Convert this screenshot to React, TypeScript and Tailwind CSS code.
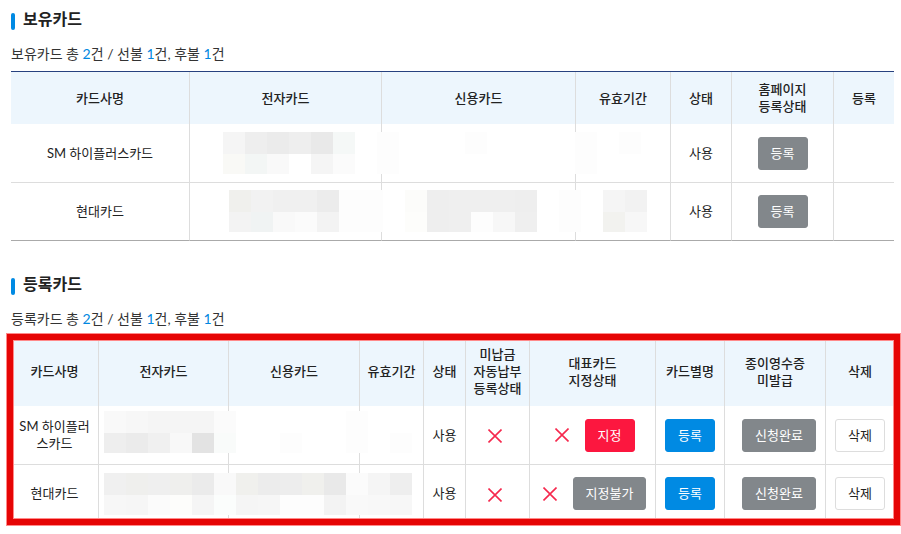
import type { ReactNode } from 'react';

type MosaicProps = {
  rows: string[];
  className: string;
};

// Masked card numbers. Each row is a list of hex tones, "-" is plain white.
const MASKS = {
  ownedFirst: [
    'f5f5f5 eeeeee ebebeb eeeeee e9e9e9 f5f8f7 - fdfdfd - - - fdfdfd - - - - fdfdfd - fdfdfd',
    'f9f9f6 f3f6f5 f9f9f9 - f5f5f5 fbfbfb - fdfdfd - - - - - - - - fdfdfd - -',
  ],
  ownedSecond: [
    'f0f0ed f2f2f2 f0f0f0 f0f0f0 ececec fdfdfd fdfdfd - fcfcfa eeeeee efefef efefef efefef eeeeee - fdfdfd - f5f5f5 f2f2f2',
    'f3f3f3 f0f3f3 f9f9f9 fbfbfb f3f3f3 fdfdfd fdfdfd - fdfdfb eeeeee efefef fdfdfd f7f7f7 efefef - fdfdfd - f2f2ef f7f7f7',
  ],
  registeredFirst: [
    'f9f9f9 f7f7f7 f5f5f5 f5f5f5 f5f5f5 fbfbfb - - - - - fdfdfd - -',
    'eeeeee ebebeb f0f0f0 f8f8f8 e3e3e3 f9fbfa - - fdfdfd - - fdfdfd - fdfdfd',
  ],
  registeredSecond: [
    'f0f0f0 efefed efefef efefed ebebeb f9f9f9 f0f0ed ececec ededed f0f0ed e9e9e9 fbfbfb f5f5f5 eeeeee',
    'f7f7f7 f6f6f6 fbfbfb fdfdfb f5f5f5 fbfdfc f5f5f5 f6f6f6 fdfdfd fdfdfd f3f3f3 f9f9f9 f8f8f8 f7f7f7',
  ],
};

function Mosaic({ rows, className }: MosaicProps) {
  return (
    <div aria-hidden="true" className={`absolute z-10 ${className}`}>
      {rows.map((row, r) => (
        <div key={r} className={r === 0 ? 'flex h-[22px]' : 'flex h-5'}>
          {row.split(' ').map((tone, i) => (
            <span
              key={i}
              className="w-[22px] shrink-0"
              style={{ backgroundColor: tone === '-' ? '#ffffff' : `#${tone}` }}
            />
          ))}
        </div>
      ))}
    </div>
  );
}

const TONES = {
  gray: 'border-[#82878b] bg-[#82878b] text-white',
  blue: 'border-[#008ae3] bg-[#008ae3] text-white',
  red: 'border-[#fc173f] bg-[#fc173f] text-white',
  white: 'border-[#dddddd] bg-white text-[#222222]',
};

function Btn({ tone, children }: { tone: keyof typeof TONES; children: ReactNode }) {
  return (
    <button
      type="button"
      className={`inline-flex h-[33px] min-w-[50px] items-center justify-center rounded-[3px] border px-3 align-middle whitespace-nowrap ${TONES[tone]}`}
    >
      {children}
    </button>
  );
}

function Cross() {
  return (
    <svg
      viewBox="0 0 14 14"
      className="inline-block size-[14px] shrink-0 align-middle"
      role="img"
      aria-label="미등록"
    >
      <path d="M0.5 0.5 13.5 13.5M13.5 0.5 0.5 13.5" stroke="#f6284d" strokeWidth="1.6" fill="none" />
    </svg>
  );
}

function Heading({ children }: { children: ReactNode }) {
  return (
    <h2 className="flex h-6 items-center gap-2 text-[16px] leading-6 font-bold text-[#222222]">
      <span className="mt-1 h-[17px] w-1 rounded-[2px] bg-[#008ae3]" />
      {children}
    </h2>
  );
}

function Summary({ label }: { label: string }) {
  return (
    <p className="mt-[13px] text-[14px] leading-5 text-[#333333]">
      {label} 총 <Num>2</Num>건 / 선불 <Num>1</Num>건, 후불 <Num>1</Num>건
    </p>
  );
}

function Num({ children }: { children: ReactNode }) {
  return <span className="text-[#0087e0]">{children}</span>;
}

function Th({ children }: { children: ReactNode }) {
  return (
    <th
      scope="col"
      className="border-r border-[#dddddd] bg-[#edf6fd] py-[9px] font-medium last:border-r-0"
    >
      {children}
    </th>
  );
}

function Td({ children, className = '' }: { children?: ReactNode; className?: string }) {
  return (
    <td className={`border-r border-b border-[#dddddd] last:border-r-0 ${className}`}>
      {children}
    </td>
  );
}

const TABLE =
  'w-full table-fixed border-separate border-spacing-0 border-t border-[#27417f] text-center text-[13px] leading-[17px] text-[#222222]';

function OwnedCards() {
  const rows = [
    { name: 'SM 하이플러스카드', mask: MASKS.ownedFirst, place: 'top-2 left-[33px]' },
    { name: '현대카드', mask: MASKS.ownedSecond, place: 'top-[7px] left-[39px]' },
  ];
  return (
    <table className={`mt-[7px] ${TABLE}`}>
      <colgroup>
        <col className="w-[179px]" />
        <col className="w-[192px]" />
        <col className="w-[194px]" />
        <col className="w-[95px]" />
        <col className="w-[61px]" />
        <col className="w-[102px]" />
        <col className="w-[60px]" />
      </colgroup>
      <thead>
        <tr className="h-[52px]">
          <Th>카드사명</Th>
          <Th>전자카드</Th>
          <Th>신용카드</Th>
          <Th>유효기간</Th>
          <Th>상태</Th>
          <Th>
            홈페이지
            <br />
            등록상태
          </Th>
          <Th>등록</Th>
        </tr>
      </thead>
      <tbody className="[&>tr:last-child>td]:border-b-[#aaaaaa]">
        {rows.map((row) => (
          <tr key={row.name} className="h-[59px] last:h-[58px]">
            <Td>{row.name}</Td>
            <Td className="relative">
              <Mosaic rows={row.mask} className={row.place} />
            </Td>
            <Td />
            <Td />
            <Td>사용</Td>
            <Td>
              <Btn tone="gray">등록</Btn>
            </Td>
            <Td />
          </tr>
        ))}
      </tbody>
    </table>
  );
}

function RegisteredCards() {
  const rows = [
    {
      name: 'SM 하이플러스카드',
      mask: MASKS.registeredFirst,
      place: 'top-[5px] left-[5px]',
      assign: <Btn tone="red">지정</Btn>,
    },
    {
      name: '현대카드',
      mask: MASKS.registeredSecond,
      place: 'top-2 left-[5px]',
      assign: <Btn tone="gray">지정불가</Btn>,
    },
  ];
  return (
    <div className="relative mt-[7px]">
      <table className={TABLE}>
        <colgroup>
          <col className="w-[88px]" />
          <col className="w-[130px]" />
          <col className="w-[131px]" />
          <col className="w-[64px]" />
          <col className="w-[42px]" />
          <col className="w-[64px]" />
          <col className="w-[126px]" />
          <col className="w-[69px]" />
          <col className="w-[101px]" />
          <col className="w-[68px]" />
        </colgroup>
        <thead>
          <tr className="h-[69px]">
            <Th>카드사명</Th>
            <Th>전자카드</Th>
            <Th>신용카드</Th>
            <Th>유효기간</Th>
            <Th>상태</Th>
            <Th>
              미납금
              <br />
              자동납부
              <br />
              등록상태
            </Th>
            <Th>
              대표카드
              <br />
              지정상태
            </Th>
            <Th>카드별명</Th>
            <Th>
              종이영수증
              <br />
              미발급
            </Th>
            <Th>삭제</Th>
          </tr>
        </thead>
        <tbody>
          {rows.map((row) => (
            <tr key={row.name} className="h-[59px] last:h-[58px]">
              <Td className="px-2">{row.name}</Td>
              <Td className="relative">
                <Mosaic rows={row.mask} className={row.place} />
              </Td>
              <Td />
              <Td />
              <Td>사용</Td>
              <Td className="pr-1.5">
                <Cross />
              </Td>
              <Td className="pl-1">
                <div className="flex items-center justify-center gap-4">
                  <Cross />
                  {row.assign}
                </div>
              </Td>
              <Td>
                <Btn tone="blue">등록</Btn>
              </Td>
              <Td className="pl-2">
                <Btn tone="gray">신청완료</Btn>
              </Td>
              <Td>
                <Btn tone="white">삭제</Btn>
              </Td>
            </tr>
          ))}
        </tbody>
      </table>
      {/* Highlight frame around the registered cards */}
      <div className="pointer-events-none absolute -inset-y-0.5 -right-[6px] -left-1 z-20 border-[6px] border-[#e60505] shadow-[0_0_0_1px_#ff8a8a,inset_0_0_0_1px_#ff8a8a]" />
    </div>
  );
}

export default function App() {
  return (
    <main className="bg-white pt-[7px] pr-[7px] pb-2 pl-[11px] font-['Lato','Noto_Sans_CJK_KR',sans-serif]">
      <section>
        <Heading>보유카드</Heading>
        <Summary label="보유카드" />
        <OwnedCards />
      </section>
      <section className="mt-[31px]">
        <Heading>등록카드</Heading>
        <Summary label="등록카드" />
        <RegisteredCards />
      </section>
    </main>
  );
}
